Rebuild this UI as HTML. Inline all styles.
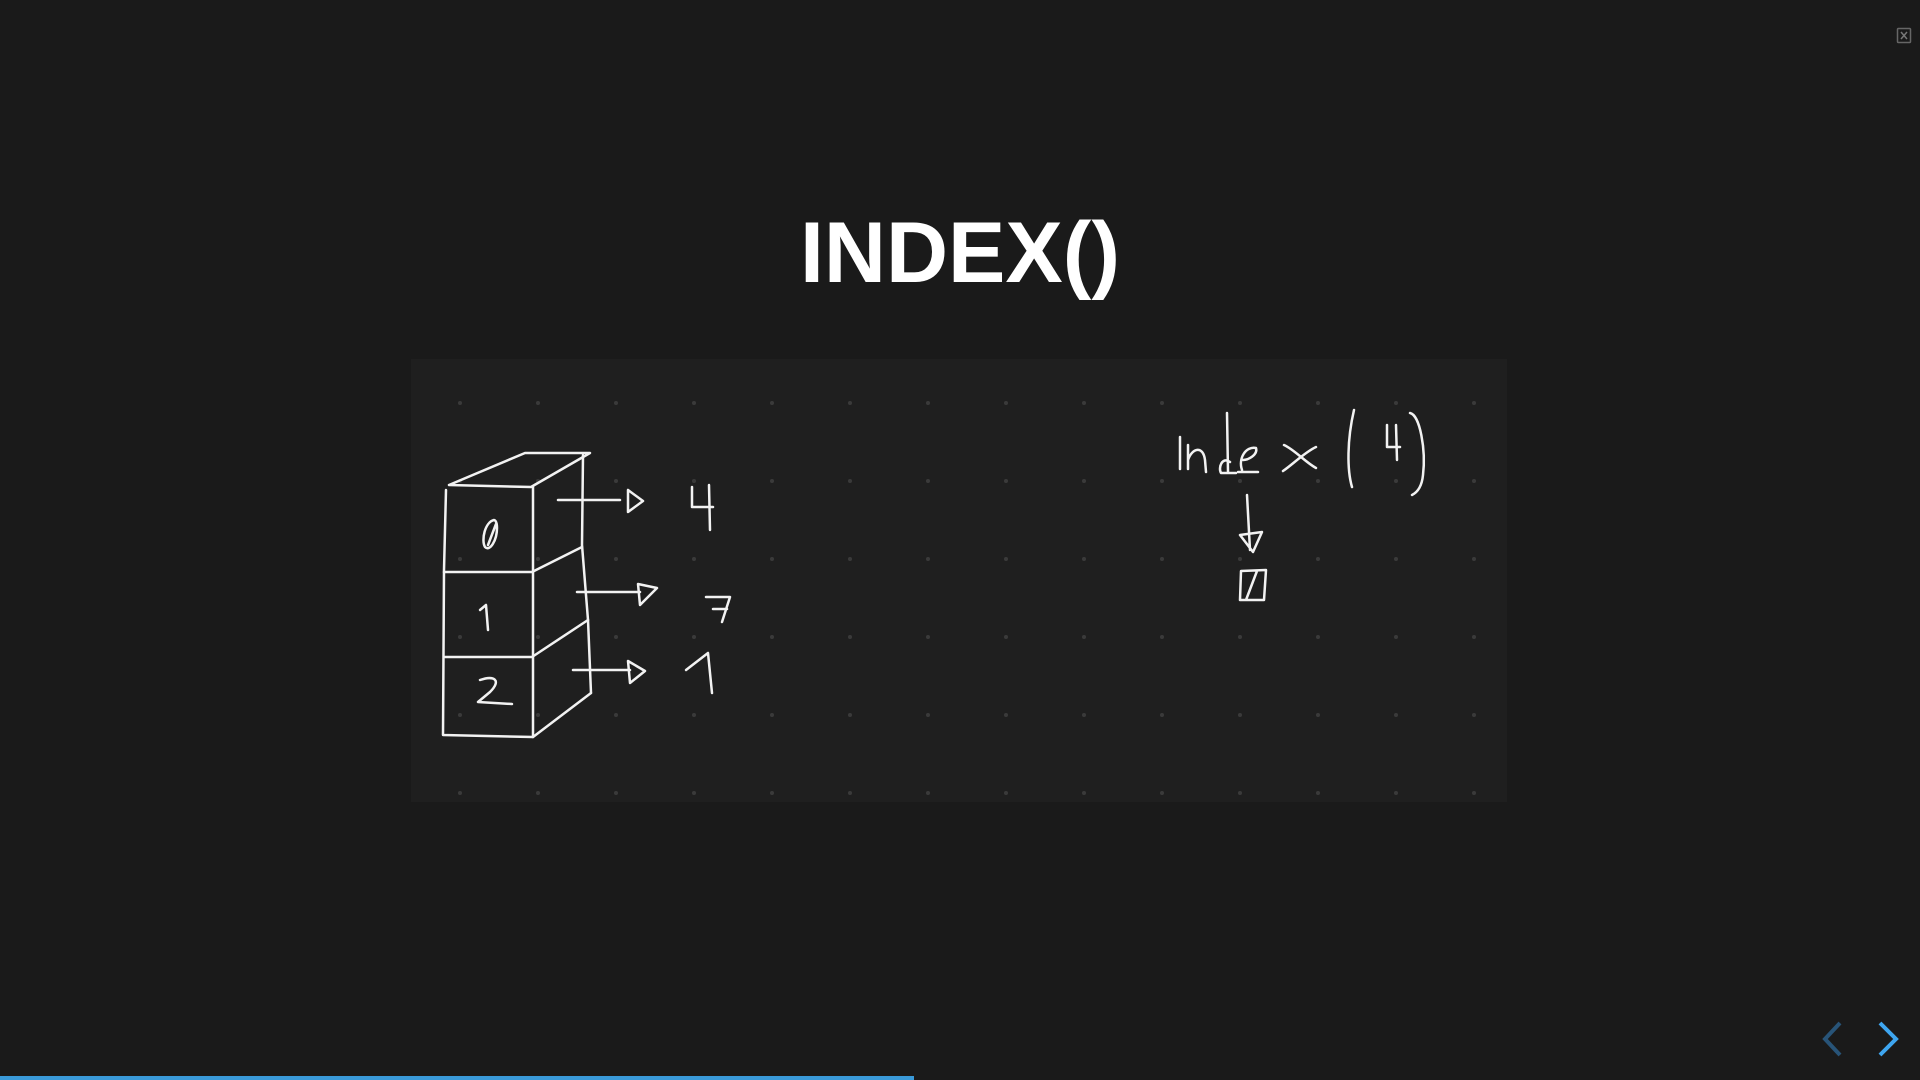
<!DOCTYPE html>
<html><head><meta charset="utf-8"><style>
html,body{margin:0;padding:0;width:1920px;height:1080px;background:#1a1a1a;overflow:hidden;font-family:"Liberation Sans",sans-serif}
h1{position:absolute;left:0;width:1920px;top:203px;margin:0;text-align:center;color:#fff;font-size:86px;font-weight:bold;line-height:100px;letter-spacing:0px}
#panel{position:absolute;left:411px;top:359px;width:1096px;height:443px;background:#1f1f1f}
#bar{position:absolute;left:0;top:1076px;width:914px;height:4px;background:#3a9ad9}
</style></head><body>
<h1>INDEX()</h1>
<div id="panel"></div>
<svg width="1920" height="1080" style="position:absolute;left:0;top:0">
<defs><pattern id="d" x="421" y="364" width="78" height="78" patternUnits="userSpaceOnUse"><circle cx="39" cy="39" r="2" fill="#3a3a3a"/></pattern></defs>
<rect x="411" y="359" width="1096" height="443" fill="url(#d)"/>
<g fill="none" stroke="#f2f2f2" stroke-width="2.5" stroke-linecap="round" stroke-linejoin="round">
<path d="M449 485 L525 453 L590 453 L531 487 L449 485"/>
<path d="M446 490 L444 570 L443 735 L533 737 L533 487"/>
<path d="M444 572 L532 572 L582 547"/>
<path d="M445 657 L532 657 L535 655 L588 620"/>
<path d="M533 737 L591 693"/>
<path d="M583 455 L582 545 L588 620 L591 693"/>
<path d="M558 500 L620 500 M628 490 L628 512 L643 501 Z"/>
<path d="M577 592 L640 592 M638 584 L640 605 L657 588 Z"/>
<path d="M573 670 L630 670 M628 661 L630 683 L645 671 Z"/>
<path d="M692 487 L692 507 L713 507 M709 485 L710 530"/>
<path d="M706 597 L730 597 L722 622 M713 609 L727 609"/>
<path d="M686 670 L708 653 L712 693"/>
<path d="M494 520 C485 522 481 540 485 547 C490 552 497 540 497 528 C497 520 494 520 494 520 M488 545 L496 524"/>
<path d="M480 610 L486 605 L488 630"/>
<path d="M480 680 C494 675 502 680 490 692 L478 702 L512 704"/>
<path d="M1180 437 L1180 469"/>
<path d="M1188 469 L1188 445 M1188 460 C1192 448 1203 445 1205 460 L1206 472"/>
<path d="M1227 413 L1228 472 M1230 462 C1222 456 1218 468 1221 473 L1236 473"/>
<path d="M1238 472 L1258 472 M1242 470 C1238 458 1246 446 1256 448 C1258 455 1248 460 1243 460"/>
<path d="M1284 445 C1295 450 1305 462 1316 468 M1316 447 C1305 452 1292 465 1283 471"/>
<path d="M1354 410 C1347 440 1347 470 1352 487"/>
<path d="M1387 425 L1387 447 L1400 447 M1396 425 L1397 460"/>
<path d="M1410 413 C1420 415 1426 450 1423 475 C1422 485 1418 492 1412 495"/>
<path d="M1247 495 L1250 550 M1240 535 L1262 532 L1253 552 Z"/>
<path d="M1241 571 L1266 570 L1264 600 L1240 600 Z M1246 600 L1257 571"/>
</g>
<rect x="1897.5" y="28.5" width="13" height="14" rx="1" fill="none" stroke="#666" stroke-width="1.5"/>
<path d="M1901 32 L1907 39 M1907 32 L1901 39" stroke="#777" stroke-width="1.5"/>
<path d="M1840 1023 L1825 1039 L1840 1055" fill="none" stroke="#285478" stroke-width="4"/>
<path d="M1880 1023 L1896 1039 L1880 1055" fill="none" stroke="#3ea6f0" stroke-width="4"/>
</svg>
<div id="bar"></div>
</body></html>
